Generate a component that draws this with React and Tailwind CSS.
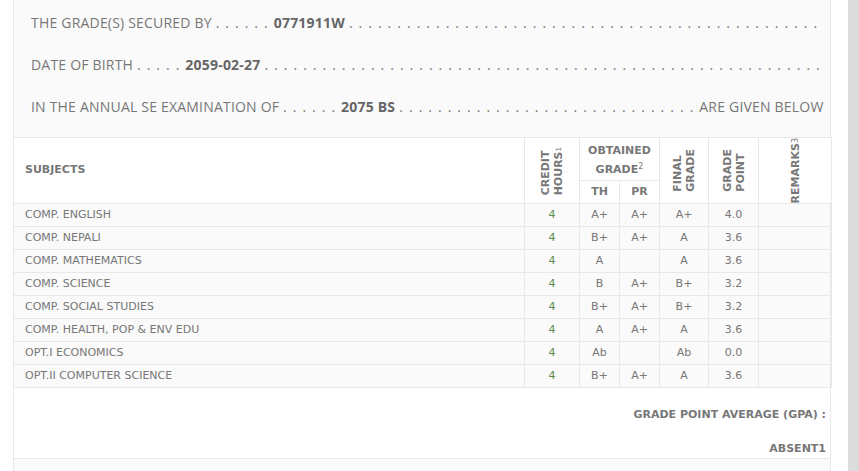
const rows = [
  ["COMP. ENGLISH", "4", "A+", "A+", "A+", "4.0"],
  ["COMP. NEPALI", "4", "B+", "A+", "A", "3.6"],
  ["COMP. MATHEMATICS", "4", "A", "", "A", "3.6"],
  ["COMP. SCIENCE", "4", "B", "A+", "B+", "3.2"],
  ["COMP. SOCIAL STUDIES", "4", "B+", "A+", "B+", "3.2"],
  ["COMP. HEALTH, POP & ENV EDU", "4", "A", "A+", "A", "3.6"],
  ["OPT.I ECONOMICS", "4", "Ab", "", "Ab", "0.0"],
  ["OPT.II COMPUTER SCIENCE", "4", "B+", "A+", "A", "3.6"],
];

function Dots({ n, className = "" }) {
  return <span className={"tracking-[6px] " + className}>{".".repeat(n)}</span>;
}

function Vertical({ children }) {
  return (
    <div className="flex justify-center">
      <div className="[writing-mode:vertical-rl] rotate-180 leading-[13px] text-left">{children}</div>
    </div>
  );
}

export default function App() {
  const th = "border border-[#e8e8e8] font-bold text-[#777] text-[11px]";
  const td = "border border-[#e8e8e8] h-[23px] text-center";
  return (
    <div className="flex w-[859px] h-[471px] bg-white overflow-hidden">
      <div className="w-[13px]" />
      <div className="w-[818px] border-x border-[#e8e8e8] bg-[#fafafa] text-[#777]">
        <div className="pl-[17px] pr-[7px] pt-[1px] pb-[10px] text-[14px] [font-family:'Open_Sans',sans-serif] tracking-[0.2px]">
          <div className="h-[42px] flex items-center whitespace-nowrap">
            <span>THE GRADE(S) SECURED BY&nbsp;</span>
            <Dots n={6} />
            <b className="text-[#666]">0771911W</b>
            <Dots n={49} className="ml-[4px]" />
          </div>
          <div className="h-[42px] flex items-center whitespace-nowrap">
            <span>DATE OF BIRTH&nbsp;</span>
            <Dots n={5} />
            <b className="text-[#666]">2059-02-27</b>
            <Dots n={58} className="ml-[4px]" />
          </div>
          <div className="h-[42px] flex items-center whitespace-nowrap">
            <span>IN THE ANNUAL SE EXAMINATION OF&nbsp;</span>
            <Dots n={6} />
            <b className="text-[#666]">2075 BS</b>
            <Dots n={31} className="ml-[4px]" />
            <span className="ml-auto">ARE GIVEN BELOW</span>
          </div>
        </div>
        <table className="w-[818px] -mx-px table-fixed border-collapse [font-family:'DejaVu_Sans',sans-serif] text-[11px]">
          <colgroup>
            <col className="w-[511px]" />
            <col className="w-[55px]" />
            <col className="w-[40px]" />
            <col className="w-[40px]" />
            <col className="w-[49px]" />
            <col className="w-[50px]" />
            <col className="w-[73px]" />
          </colgroup>
          <thead className="bg-white">
            <tr className="h-[42px]">
              <th rowSpan={2} className={th + " text-left pl-[11px]"}>SUBJECTS</th>
              <th rowSpan={2} className={th}>
                <Vertical>CREDIT<br />HOURS<span className="text-[7px] font-normal">1</span></Vertical>
              </th>
              <th colSpan={2} className={th + " leading-[19px] pt-[2px]"}>
                OBTAINED<br />GRADE<sup className="text-[8px] font-normal">2</sup>
              </th>
              <th rowSpan={2} className={th}>
                <Vertical>FINAL<br />GRADE</Vertical>
              </th>
              <th rowSpan={2} className={th}>
                <Vertical>GRADE<br />POINT</Vertical>
              </th>
              <th rowSpan={2} className={th}>
                <Vertical>REMARKS<span className="text-[8px] font-normal">3</span></Vertical>
              </th>
            </tr>
            <tr className="h-[23px]">
              <th className={th}>TH</th>
              <th className={th}>PR</th>
            </tr>
          </thead>
          <tbody>
            {rows.map((r) => (
              <tr key={r[0]}>
                <td className="border border-[#e8e8e8] h-[23px] pl-[11px] text-[#777]">{r[0]}</td>
                <td className={td + " text-[#5e8a52]"}>{r[1]}</td>
                <td className={td}>{r[2]}</td>
                <td className={td}>{r[3]}</td>
                <td className={td}>{r[4]}</td>
                <td className={td}>{r[5]}</td>
                <td className={td}></td>
              </tr>
            ))}
          </tbody>
        </table>
        <div className="bg-white border-b border-[#e8e8e8] h-[71px] pr-[4px] [font-family:'DejaVu_Sans',sans-serif] font-bold text-[11px] text-right flex flex-col">
          <div className="h-[37px] flex items-end justify-end pb-[2px]">GRADE POINT AVERAGE (GPA) :</div>
          <div className="h-[30px] flex items-center justify-end pt-[18px]">ABSENT1</div>
        </div>
      </div>
      <div className="w-[17px]" />
      <div className="w-[11px] bg-[#dcdcdc]" />
    </div>
  );
}
